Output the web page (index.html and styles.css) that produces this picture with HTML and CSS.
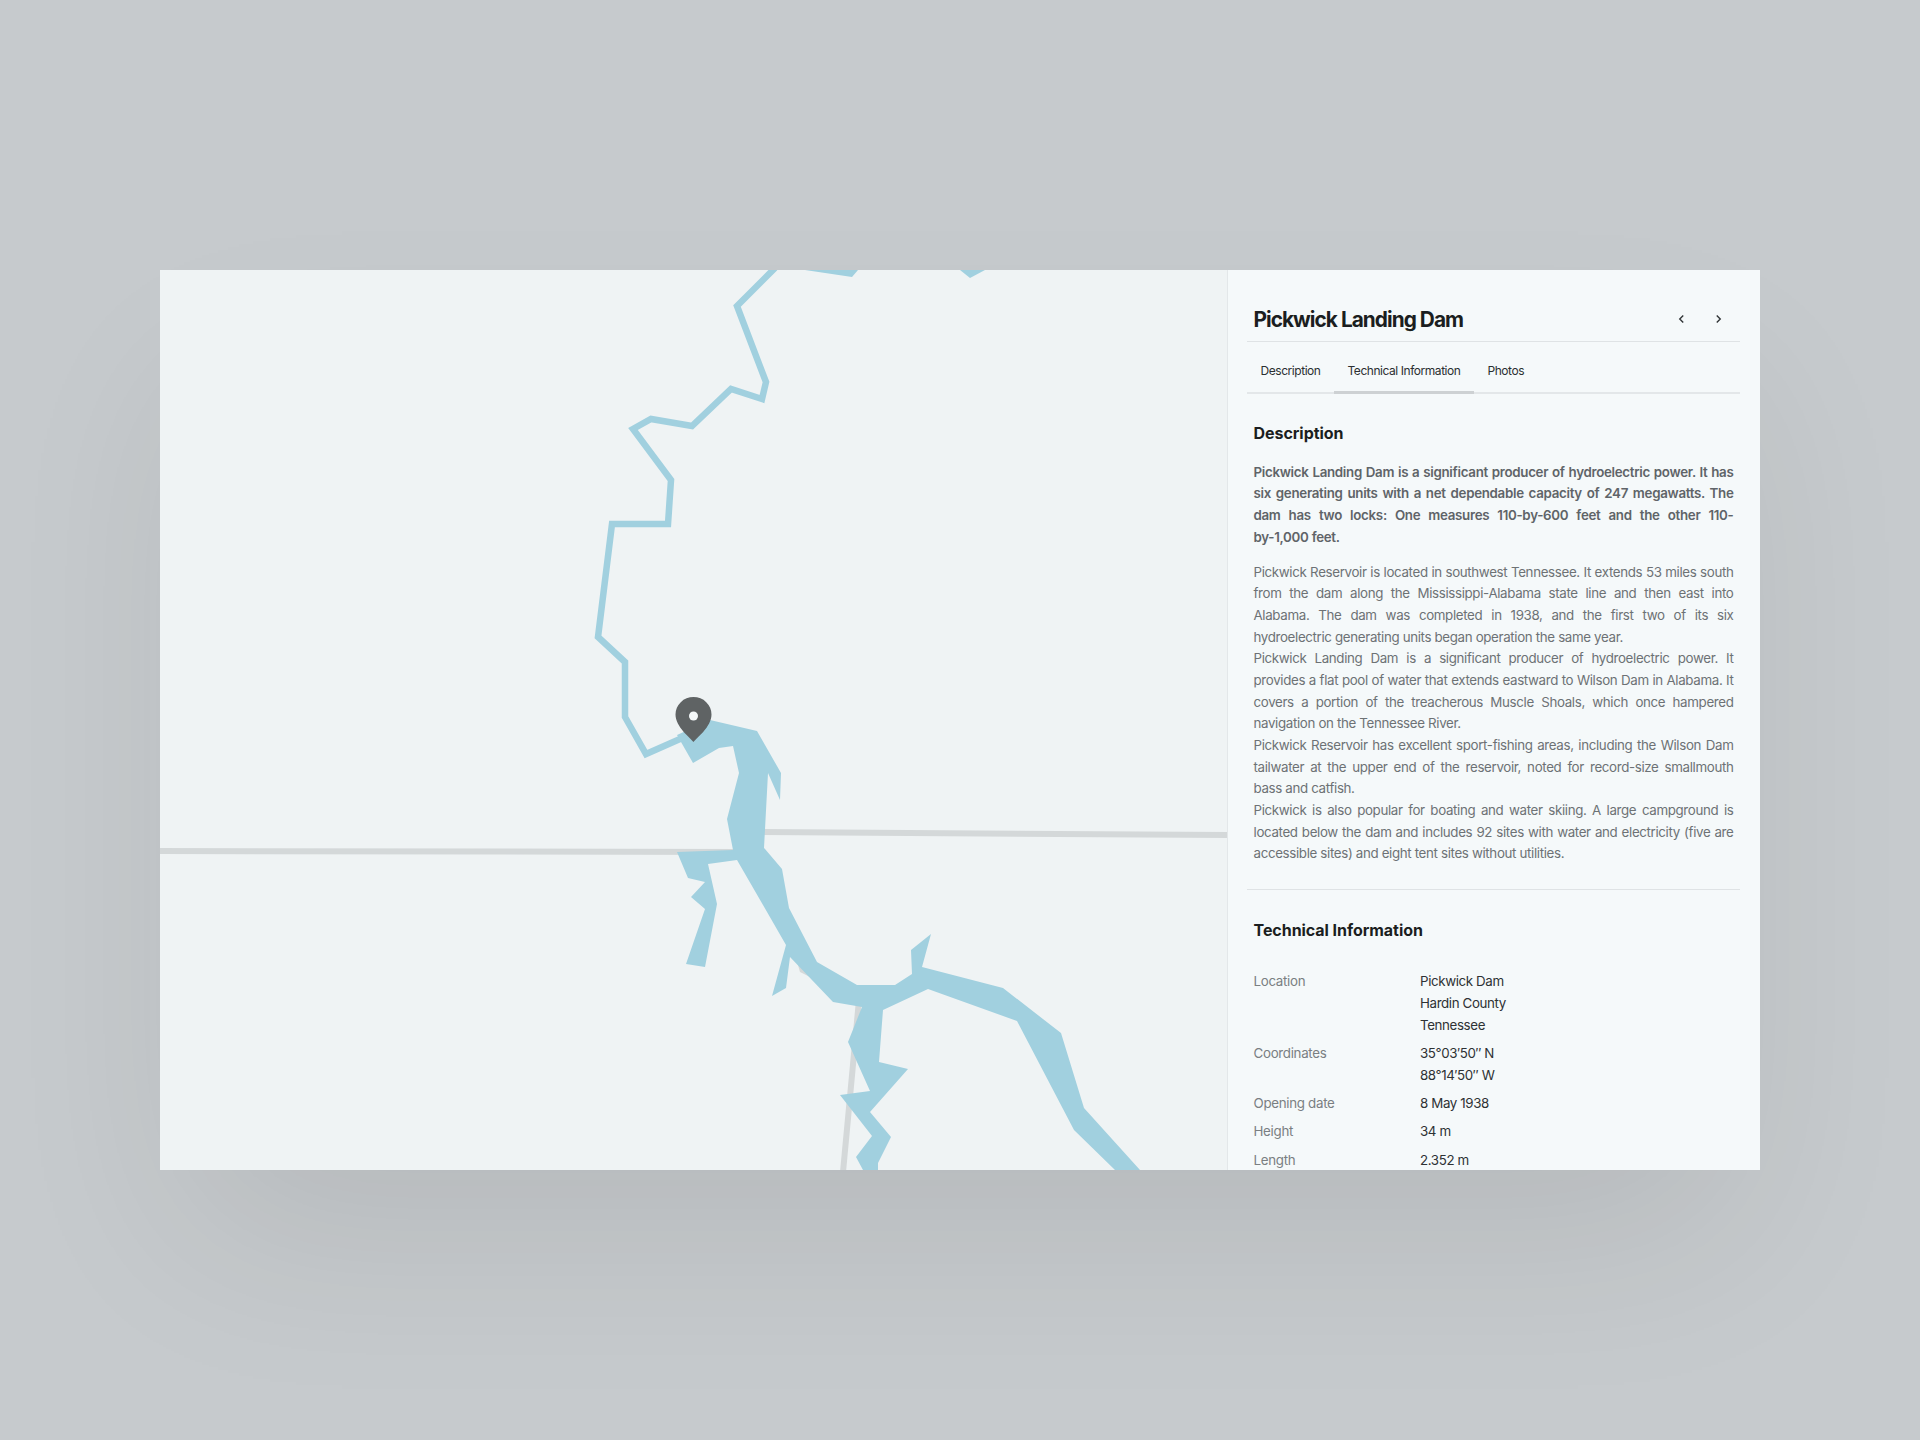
FILE: index.html
```html
<!DOCTYPE html>
<html lang="en">
<head>
<meta charset="utf-8">
<title>Pickwick Landing Dam</title>
<link rel="stylesheet" href="styles.css">
</head>
<body>
<main class="window">
  <section class="map">
    <svg class="map-svg" viewBox="160 270 1067 900" aria-label="Map of the Tennessee River">
      <polyline class="border" points="160,851 740,852"/>
      <polyline class="border" points="760,832 1227,835"/>
      <polyline class="border" points="859,1000 843,1172"/>
      <polygon class="border-fill" points="796,958 800,972 810,977 816,972"/>
      <polyline class="stream" points="775,268 737,306 766,382 762,399 731,389 692,426 651,419 633,429 671,480 668,524 612,524 598,637 625,662 625,717 646,754 680,739"/>
      <polygon class="water" points="805,270 852,277 858,270"/>
      <polygon class="water" points="960,270 970,278 985,270"/>
      <polygon class="water" points="677,735 710,720 757,731 781,773 780,800 768,773 764,848 765,849 782,869 789,908 817,962 857,985 895,985 912,974 911,950 931,934 922,967 1003,988 1061,1033 1084,1108 1140,1170 1115,1170 1074,1130 1017,1021 928,989 883,1010 879,1062 908,1069 870,1112 891,1137 878,1163 878,1170 863,1170 856,1157 872,1136 840,1095 870,1091 848,1042 862,1007 833,1002 790,957 786,988 772,996 786,945 737,860 708,864 717,904 705,967 686,964 705,909 691,897 705,882 688,878 677,852 733,850 727,819 739,773 733,746 719,748 693,763"/>
      <path class="pin" d="M693.500 742c-3-4-18-15-18-27.500a18 17.500 0 0 1 36 0c0 12.500-15 23.500-18 27.500z"/>
      <circle class="pin-hole" cx="693.500" cy="716" r="4.500"/>
    </svg>
  </section>
  <aside class="side">
    <header class="head">
      <h1 class="title">Pickwick Landing Dam</h1>
      <div class="pager">
        <svg class="chev" viewBox="0 0 6 10"><path d="M4.500 2 1.500 5l3 3"/></svg>
        <svg class="chev" viewBox="0 0 6 10"><path d="M1.500 2 4.500 5l-3 3"/></svg>
      </div>
    </header>
    <nav class="tabs">
      <span class="tab">Description</span>
      <span class="tab tab-active">Technical Information</span>
      <span class="tab">Photos</span>
    </nav>
    <section class="block">
      <h2 class="heading">Description</h2>
      <p class="lead">Pickwick Landing Dam is a significant producer of hydroelectric power. It has six generating units with a net dependable capacity of 247 megawatts. The dam has two locks: One measures 110-by-600 feet and the other 110-<span class="nowrap">by-1,000</span> feet.</p>
      <p class="para">Pickwick Reservoir is located in southwest Tennessee. It extends 53 miles south from the dam along the Mississippi-Alabama state line and then east into Alabama. The dam was completed in 1938, and the first two of its six hydroelectric generating units began operation the same year.</p>
      <p class="para">Pickwick Landing Dam is a significant producer of hydroelectric power. It provides a flat pool of water that extends eastward to Wilson Dam in Alabama. It covers a portion of the treacherous Muscle Shoals, which once hampered navigation on the Tennessee River.</p>
      <p class="para">Pickwick Reservoir has excellent sport-fishing areas, including the Wilson Dam tailwater at the upper end of the reservoir, noted for record-size smallmouth bass and catfish.</p>
      <p class="para">Pickwick is also popular for boating and water skiing. A large campground is located below the dam and includes 92 sites with water and electricity (five are accessible sites) and eight tent sites without utilities.</p>
    </section>
    <section class="block block-tech">
      <h2 class="heading">Technical Information</h2>
      <dl class="facts">
        <dt>Location</dt><dd>Pickwick Dam<br>Hardin County<br>Tennessee</dd>
        <dt>Coordinates</dt><dd>35°03′50″ N<br>88°14′50″ W</dd>
        <dt>Opening date</dt><dd>8 May 1938</dd>
        <dt>Height</dt><dd>34 m</dd>
        <dt>Length</dt><dd>2.352 m</dd>
      </dl>
    </section>
  </aside>
</main>
</body>
</html>
```
FILE: styles.css
```css
* { box-sizing: border-box; }
html, body { height: 100%; }
body {
  margin: 0;
  background: #c6cacd;
  display: flex;
  align-items: center;
  justify-content: center;
  font-family: Inter, "Liberation Sans", sans-serif;
}
.window {
  width: 1600px;
  height: 900px;
  display: flex;
  background: #eff3f4;
  box-shadow: 0 90px 180px -30px rgba(0, 0, 0, .085);
}
.map { width: 1067px; height: 900px; flex: none; background: #eff3f4; }
.map-svg { display: block; width: 1067px; height: 900px; }
.border { fill: none; stroke: #d4d8d9; stroke-width: 6; }
.border-fill { fill: #d4d8d9; }
.stream { fill: none; stroke: #a1d0df; stroke-width: 6.500; stroke-miterlimit: 6; }
.water { fill: #a1d0df; }
.pin { fill: #5f6364; }
.pin-hole { fill: #f5f9fa; }
.side {
  width: 533px;
  height: 900px;
  flex: none;
  overflow: hidden;
  background: #f5f9fa;
  border-left: 1px solid #e3e7e9;
  padding: 0 20px 0 19px;
}
.head {
  height: 72px;
  display: flex;
  align-items: flex-end;
  justify-content: space-between;
  padding: 0 18px 5px 6.500px;
  border-bottom: 1px solid #dfe3e5;
}
.title {
  margin: 0;
  font-size: 20.800px;
  line-height: 32px;
  font-weight: 700;
  letter-spacing: -.95px;
  color: #1b1e20;
}
.pager { display: flex; gap: 30px; padding-bottom: 11.500px; }
.chev { width: 7px; height: 12px; display: block; fill: none; stroke: #303436; stroke-width: 1.200; }
.tabs {
  display: flex;
  height: 52px;
  border-bottom: 2px solid #e3e7e9;
}
.tab {
  padding: 19px 13.500px 0;
  font-size: 12px;
  line-height: 20px;
  letter-spacing: -.45px;
  color: #2b2f31;
}
.tab-active { height: 52px; border-bottom: 3px solid #cdd1d3; }
.block { padding: 0 6.500px; }
.heading {
  margin: 27px 0 0;
  font-size: 16px;
  line-height: 24px;
  font-weight: 700;
  letter-spacing: -.05px;
  color: #1b1e20;
}
.lead, .para {
  margin: 0;
  font-size: 13.330px;
  line-height: 21.670px;
  letter-spacing: -.35px;
  text-align: justify;
  color: #6d7275;
}
.lead { margin: 16.500px 0 13.330px; font-weight: 600; letter-spacing: -.3px; color: #5f6468; }
.nowrap { white-space: nowrap; }
.block-tech { margin: 24px 0 0; border-top: 1px solid #dfe3e5; }
.block-tech .heading { margin-top: 28px; }
.facts {
  margin: 29.500px 0 0;
  display: grid;
  grid-template-columns: 166.500px 1fr;
  row-gap: 6.670px;
  font-size: 13.330px;
  line-height: 21.670px;
  letter-spacing: -.3px;
}
.facts dt { color: #7a7f82; }
.facts dd { margin: 0; letter-spacing: -.38px; color: #2e3234; }
```
